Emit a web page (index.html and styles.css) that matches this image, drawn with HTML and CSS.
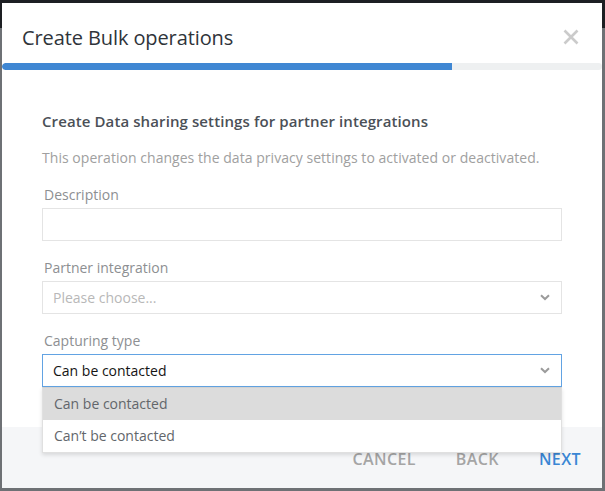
FILE: index.html
```html
<!DOCTYPE html>
<html lang="en">
<head>
    <meta charset="UTF-8">
    <meta name="viewport" content="width=device-width, initial-scale=1.0">
    <title>Create Bulk operations</title>
    <link rel="stylesheet" href="styles.css">
</head>
<body>
    <div class="modal">
        <div class="modal-header">
            <h2>Create Bulk operations</h2>
            <svg class="close" width="16" height="16" viewBox="0 0 16 16">
                <path d="M1.5 1.5 L14.5 14.5 M14.5 1.5 L1.5 14.5" stroke="#cbcbcb" stroke-width="2.6" fill="none"/>
            </svg>
        </div>

        <div class="progress">
            <div class="progress-fill"></div>
        </div>

        <div class="modal-body">
            <h3>Create Data sharing settings for partner integrations</h3>
            <p class="intro">This operation changes the data privacy settings to activated or deactivated.</p>

            <div class="field">
                <label>Description</label>
                <div class="input"></div>
            </div>

            <div class="field">
                <label>Partner integration</label>
                <div class="input select placeholder">
                    <span>Please choose...</span>
                    <svg class="chevron" width="10" height="7" viewBox="0 0 10 7">
                        <polyline points="1,1.2 5,5 9,1.2" stroke="#9b9b9b" stroke-width="2" fill="none"/>
                    </svg>
                </div>
            </div>

            <div class="field">
                <label>Capturing type</label>
                <div class="dropdown">
                    <div class="input select focused">
                        <span>Can be contacted</span>
                        <svg class="chevron" width="10" height="7" viewBox="0 0 10 7">
                            <polyline points="1,1.2 5,5 9,1.2" stroke="#9b9b9b" stroke-width="2" fill="none"/>
                        </svg>
                    </div>
                    <ul class="menu">
                        <li class="active">Can be contacted</li>
                        <li>Can’t be contacted</li>
                    </ul>
                </div>
            </div>
        </div>

        <div class="modal-footer">
            <button type="button" class="muted">CANCEL</button>
            <button type="button" class="muted">BACK</button>
            <button type="button" class="primary">NEXT</button>
        </div>
    </div>
</body>
</html>
```

FILE: styles.css
```css
body {
    margin: 0;
    font-family: 'Open Sans', 'Liberation Sans', sans-serif;
    background: linear-gradient(#1d1f23 0, #1d1f23 28px, #6e7175 28px);
    height: 491px;
    overflow: hidden;
}

.modal {
    width: 600px;
    height: 485px;
    margin: 3px 3px 0 2px;
    background-color: white;
    display: flex;
    flex-direction: column;
}

.modal-header {
    height: 60px;
    padding: 0 23px 0 20px;
    display: flex;
    align-items: center;
    justify-content: space-between;
}

.modal-header h2 {
    margin: 0;
    font-size: 20px;
    font-weight: 400;
    letter-spacing: -0.1px;
    color: #2f343a;
    padding-top: 9px;
}

.close {
    margin-top: 8px;
}

.progress {
    height: 7px;
    border-radius: 4px;
    background-color: #eef0f1;
    overflow: hidden;
}

.progress-fill {
    width: 75%;
    height: 100%;
    border-radius: 4px 0 0 4px;
    background-color: #3f87d3;
}

.modal-body {
    flex: 1;
    padding: 41px 40px 0 40px;
}

.modal-body h3 {
    margin: 0;
    font-size: 15px;
    line-height: 20px;
    font-weight: 600;
    letter-spacing: 0.1px;
    color: #4b5057;
}

.intro {
    margin: 17px 0;
    font-size: 14px;
    line-height: 20px;
    letter-spacing: 0.04px;
    color: #a0a0a0;
}

.field {
    margin-bottom: 17px;
}

.field label {
    display: block;
    padding-left: 2px;
    margin-bottom: 3px;
    font-size: 14px;
    line-height: 20px;
    color: #8d8f92;
}

.input {
    height: 31px;
    border: 1px solid #e4e4e4;
    box-sizing: content-box;
    padding: 0 10px;
    display: flex;
    align-items: center;
    font-size: 14px;
    color: #141414;
}

.select {
    justify-content: space-between;
}

.placeholder {
    color: #b8b8b8;
}

.focused {
    border-color: #62a3e3;
}

.chevron {
    margin-right: 1px;
}

.dropdown {
    position: relative;
}

.menu {
    position: absolute;
    left: 0;
    right: 0;
    top: 33px;
    margin: 0;
    padding: 0;
    list-style: none;
    background-color: white;
    border: 1px solid #e0e0e0;
    border-top: 1px solid #d2d2d2;
    box-shadow: 0 2px 4px rgba(0,0,0,0.12);
    z-index: 2;
}

.menu li {
    height: 32px;
    line-height: 32px;
    padding-left: 11px;
    font-size: 14px;
    color: #62666b;
}

.menu li.active {
    background-color: #dcdcdc;
}

.modal-footer {
    height: 61px;
    background-color: #f5f6f8;
    display: flex;
    justify-content: flex-end;
    align-items: center;
    padding-right: 1px;
}

.modal-footer button {
    background: none;
    border: none;
    padding: 3px 20px 0 20px;
    font-family: inherit;
    font-size: 16px;
    font-weight: 600;
    letter-spacing: 0.4px;
    cursor: pointer;
}

.muted {
    color: #a5a5a5;
}

.primary {
    color: #3a86d4;
}
```
